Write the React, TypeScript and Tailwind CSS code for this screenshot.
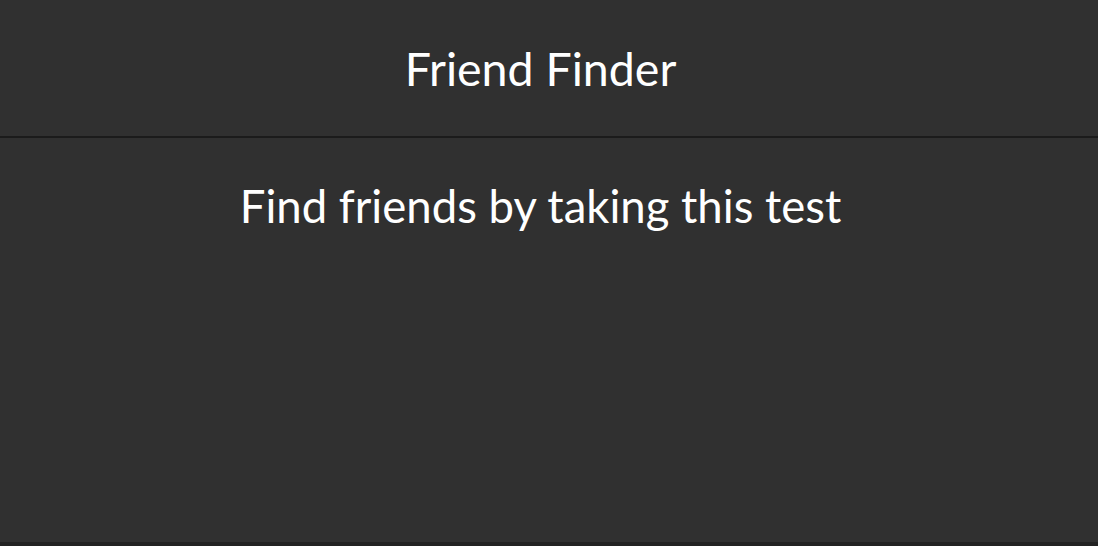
import React from 'react';

function App(): JSX.Element {
  return (
    <div className="min-h-[546px] bg-[#222222] font-['Lato',sans-serif] text-white">
      <div className="h-[542px] bg-[#303030]">
        <header className="flex h-[138px] items-center justify-center border-b-2 border-[#1b1b1b] pr-[17px]">
          <h1 className="text-[46.5px] leading-none">Friend Finder</h1>
        </header>
        <div className="flex justify-center pt-[45px] pr-[17px]">
          <h2 className="text-[45.5px] leading-none">Find friends by taking this test</h2>
        </div>
      </div>
    </div>
  );
}

export default App;
